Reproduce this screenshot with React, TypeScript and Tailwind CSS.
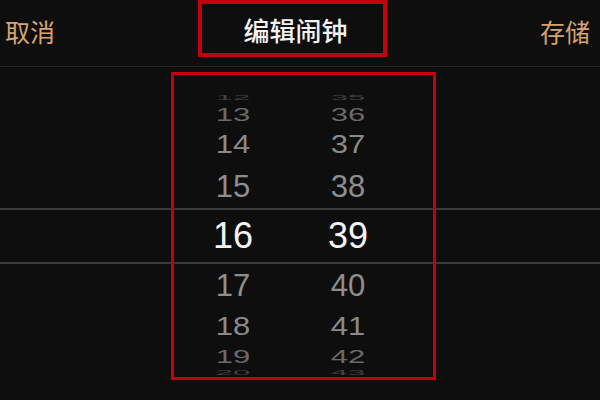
import React from 'react';

const cjk = { fontFamily: '"Noto Sans CJK SC", "Noto Sans", sans-serif' };
const num = { fontFamily: '"Liberation Sans", Arial, sans-serif' };

type Row = { h: string; m: string; height: string; size: string; color: string; scale: string };

const rows: Row[] = [
  { h: '12', m: '35', height: 'h-[12px]', size: 'text-[31px]', color: 'text-[#404040]', scale: 'scale-y-[0.25]' },
  { h: '13', m: '36', height: 'h-[22px]', size: 'text-[31px]', color: 'text-[#6a6a6a]', scale: 'scale-y-[0.6]' },
  { h: '14', m: '37', height: 'h-[39px]', size: 'text-[31px]', color: 'text-[#8a8a8a]', scale: 'scale-y-[0.82]' },
  { h: '15', m: '38', height: 'h-[44px]', size: 'text-[31px]', color: 'text-[#8e8e8e]', scale: 'scale-y-100' },
];

const rowsBelow: Row[] = [
  { h: '17', m: '40', height: 'h-[42px]', size: 'text-[31px]', color: 'text-[#8e8e8e]', scale: 'scale-y-100' },
  { h: '18', m: '41', height: 'h-[40px]', size: 'text-[31px]', color: 'text-[#8a8a8a]', scale: 'scale-y-[0.85]' },
  { h: '19', m: '42', height: 'h-[20px]', size: 'text-[31px]', color: 'text-[#6a6a6a]', scale: 'scale-y-[0.62]' },
  { h: '20', m: '43', height: 'h-[12px]', size: 'text-[31px]', color: 'text-[#404040]', scale: 'scale-y-[0.25]' },
];

function WheelRow({ row }: { row: Row }) {
  return (
    <div className={`flex items-center pl-[193px] overflow-hidden ${row.height}`}>
      <div className={`w-[80px] text-center leading-none ${row.size} ${row.color} ${row.scale}`} style={num}>
        {row.h}
      </div>
      <div className={`ml-[35px] w-[80px] text-center leading-none ${row.size} ${row.color} ${row.scale}`} style={num}>
        {row.m}
      </div>
    </div>
  );
}

export default function App() {
  return (
    <div className="w-[600px] h-[400px] bg-[#0e0e0e] overflow-hidden" style={cjk}>
      {/* Nav bar */}
      <div className="h-[67px] flex items-start border-b border-[#262626]">
        <div className="w-[198px] pl-[5px] pt-[19px] text-[25px] leading-none text-[#d6a472]">取消</div>
        <div className="w-[189px] h-[57px] border-4 border-[#c4000c] flex items-center justify-center pl-[6px] pt-[2px]">
          <span className="text-[26px] leading-none font-medium text-[#f2f2f2]">编辑闹钟</span>
        </div>
        <div className="flex-1 pr-[10px] pt-[19px] text-right text-[25px] leading-none text-[#d6a472]">存储</div>
      </div>

      {/* Time wheel */}
      <div className="relative h-[333px]">
        <div className="h-[24px]" />
        {rows.map((r) => (
          <WheelRow key={r.h} row={r} />
        ))}
        <div className="h-[56px] border-y-2 border-[#3a3a3a] flex items-center pl-[193px]">
          <div className="w-[80px] text-center leading-none text-[36px] text-[#f4f4f4]" style={num}>16</div>
          <div className="ml-[35px] w-[80px] text-center leading-none text-[36px] text-[#f4f4f4]" style={num}>39</div>
        </div>
        {rowsBelow.map((r) => (
          <WheelRow key={r.h} row={r} />
        ))}

        {/* highlight box */}
        <div className="absolute left-[171px] top-[5px] w-[265px] h-[308px] border-[3px] border-[#c4000c]" />
      </div>
    </div>
  );
}
